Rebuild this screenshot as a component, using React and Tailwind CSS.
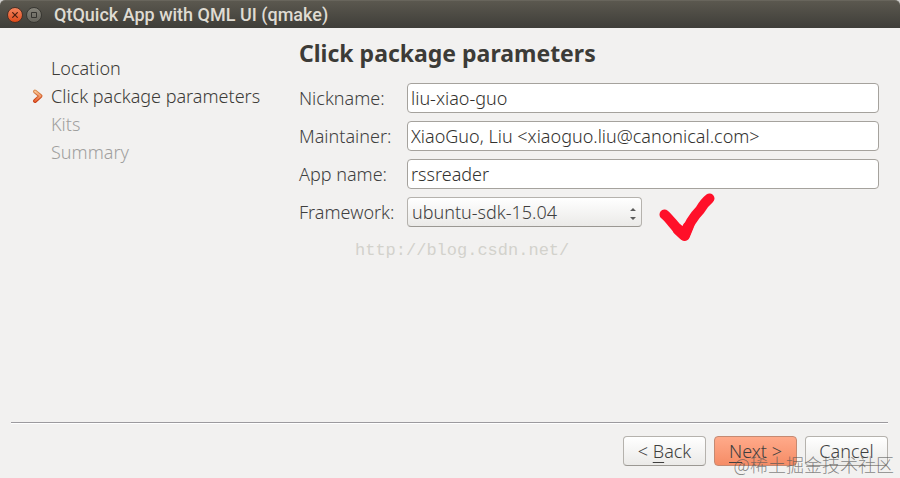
import React, { useState } from 'react';

const steps = [
    { name: 'Location', state: 'done' },
    { name: 'Click package parameters', state: 'current' },
    { name: 'Kits', state: 'pending' },
    { name: 'Summary', state: 'pending' },
];

const fields = [
    { id: 'nickname', label: 'Nickname:' },
    { id: 'maintainer', label: 'Maintainer:' },
    { id: 'appName', label: 'App name:' },
];

const TitleBar = () => (
    <header className="flex h-7 items-center rounded-t-[5px] border-t border-[#68655c] bg-linear-to-b from-[#5b584f] to-[#3f3e39] pl-[7px]">
        <button
            type="button"
            aria-label="Close"
            className="flex size-4 items-center justify-center rounded-full border border-[#4a3026] bg-linear-to-b from-[#f4845c] to-[#df4a16]"
        >
            <svg viewBox="0 0 6 6" className="size-[6px]" fill="none" stroke="#4a1f10" strokeWidth="1.2">
                <path d="M0.3 0.3 5.7 5.7M5.7 0.3 0.3 5.7" />
            </svg>
        </button>
        <button
            type="button"
            aria-label="Maximize"
            className="ml-[3px] flex size-4 items-center justify-center rounded-full border border-[#383732] bg-linear-to-b from-[#85837a] to-[#66645c]"
        >
            <svg viewBox="0 0 6 6" className="size-[6px]" fill="none" stroke="#34332f">
                <path d="M0.5 0.5H5.5V5.5H0.5Z" />
            </svg>
        </button>
        <h1 className="ml-3 text-[18px] leading-6 font-medium text-[#dfdbd2] [font-family:'Roboto','Noto_Sans',sans-serif]">
            QtQuick App with QML UI (qmake)
        </h1>
    </header>
);

const StepArrow = () => (
    <svg viewBox="0 0 12 16" className="h-4 w-3" fill="none" strokeLinecap="round" strokeLinejoin="round">
        <defs>
            <linearGradient id="arrowEdge" x1="0" y1="0" x2="0" y2="1">
                <stop offset="0" stopColor="#d98a4e" />
                <stop offset="1" stopColor="#c8380f" />
            </linearGradient>
            <linearGradient id="arrowFill" x1="0" y1="0" x2="0" y2="1">
                <stop offset="0" stopColor="#fbc796" />
                <stop offset="1" stopColor="#ea6a38" />
            </linearGradient>
        </defs>
        <path d="M3 3.5 8.5 8 3 13" stroke="url(#arrowEdge)" strokeWidth="4" />
        <path d="M3 3.5 8.5 8 3 13" stroke="url(#arrowFill)" strokeWidth="1.8" />
    </svg>
);

const StepList = () => (
    <nav className="w-[267px] shrink-0 pt-[26px]">
        <ol>
            {steps.map((step) => (
                <li
                    key={step.name}
                    aria-current={step.state === 'current' ? 'step' : undefined}
                    className={`flex h-7 items-center whitespace-nowrap ${step.state === 'pending' ? 'text-[#a09f9e]' : 'text-[#3c3b37]'}`}
                >
                    <span className="flex w-[19px] shrink-0">{step.state === 'current' && <StepArrow />}</span>
                    {step.name}
                </li>
            ))}
        </ol>
    </nav>
);

const CheckMark = () => (
    <svg
        viewBox="0 0 56 50"
        className="h-[50px] w-14 shrink-0"
        fill="none"
        stroke="#ff1029"
        strokeLinecap="round"
        strokeLinejoin="round"
    >
        <path d="M5.5 21.5 C12 27 17 36 25.5 42.5 C29 33 35 23 41 17 C44 12 46 9 50.5 5.5" strokeWidth="10" />
        <path d="M19 36.5 25.5 42.5 29 34" strokeWidth="11" />
    </svg>
);

const buttonStyle =
    'h-[30px] w-[83px] rounded border border-[#b5b2ad] border-b-[#9b9893] bg-linear-to-b from-white to-[#ebeae8] text-[#3f3f3f]';

const App = () => {
    const [values, setValues] = useState({
        nickname: 'liu-xiao-guo',
        maintainer: 'XiaoGuo, Liu <xiaoguo.liu@canonical.com>',
        appName: 'rssreader',
    });

    const handleChange = (e) => {
        setValues({ ...values, [e.target.id]: e.target.value });
    };

    return (
        <div className="bg-[#d0cfcd]">
            <div className="relative flex min-h-screen flex-col rounded-t-[5px] bg-[#f2f1f0] text-[18px] leading-6 font-light text-[#33322f] [font-family:'Noto_Sans','Open_Sans',sans-serif]">
                <TitleBar />
                <main className="flex flex-1 pr-[21px] pl-8">
                    <StepList />
                    <form id="wizard" className="min-w-0 flex-1 pt-[9px]" onSubmit={(e) => e.preventDefault()}>
                        <h2 className="text-[23px] leading-8 font-bold whitespace-nowrap text-[#3c3b37]">
                            Click package parameters
                        </h2>
                        <div className="mt-[14px] grid grid-cols-[100px_1fr] items-center gap-2">
                            {fields.map((field) => (
                                <React.Fragment key={field.id}>
                                    <label htmlFor={field.id} className="whitespace-nowrap text-[#3f3f3f]">
                                        {field.label}
                                    </label>
                                    <input
                                        id={field.id}
                                        type="text"
                                        value={values[field.id]}
                                        onChange={handleChange}
                                        className="h-[30px] w-full min-w-0 rounded border border-[#a5a29d] bg-white px-[3px] outline-none"
                                    />
                                </React.Fragment>
                            ))}
                            <label htmlFor="framework" className="whitespace-nowrap text-[#3f3f3f]">
                                Framework:
                            </label>
                            <div className="flex h-[30px] items-start">
                                <div className="relative w-[235px]">
                                    <select
                                        id="framework"
                                        className="h-[30px] w-full appearance-none rounded border border-[#b5b2ad] border-b-[#9b9893] bg-linear-to-b from-white to-[#ebeae8] px-1 text-[#3f3f3f] outline-none"
                                    >
                                        <option>ubuntu-sdk-15.04</option>
                                    </select>
                                    <svg viewBox="0 0 6 12" className="pointer-events-none absolute top-[11px] right-[6px] h-3 w-[6px]" fill="#5c5c5c">
                                        <path d="M0 3 3 0 6 3ZM0 9H6L3 12Z" />
                                    </svg>
                                </div>
                                <div className="-mt-1 ml-[17px]">
                                    <CheckMark />
                                </div>
                            </div>
                        </div>
                        <p className="mt-3 ml-14 text-[17px] leading-6 font-normal text-[#d3d2cc] [font-family:'Liberation_Mono',monospace]">
                            http://blog.csdn.net/
                        </p>
                    </form>
                </main>
                <footer className="pr-3 pb-3 pl-[11px]">
                    <hr className="border-t border-[#9c9a9e] shadow-[0_1px_0_#ffffff]" />
                    <div className="mt-[13px] flex justify-end gap-2">
                        <button type="button" className={buttonStyle}>
                            &lt; <span className="underline decoration-1 underline-offset-4">B</span>ack
                        </button>
                        <button
                            type="submit"
                            form="wizard"
                            className="h-[30px] w-[83px] rounded border border-[#c58a72] bg-linear-to-b from-[#ffaa8a] to-[#f58c66] text-[#3f3f3f]"
                        >
                            <span className="underline decoration-1 underline-offset-4">N</span>ext &gt;
                        </button>
                        <button type="button" className={buttonStyle}>
                            Cancel
                        </button>
                    </div>
                </footer>
                <p className="pointer-events-none absolute right-[6px] bottom-[2px] text-[18px] leading-6 font-light text-[#555555b3] [font-family:'Noto_Sans_CJK_SC',sans-serif]">
                    @稀土掘金技术社区
                </p>
            </div>
        </div>
    );
};

export default App;
